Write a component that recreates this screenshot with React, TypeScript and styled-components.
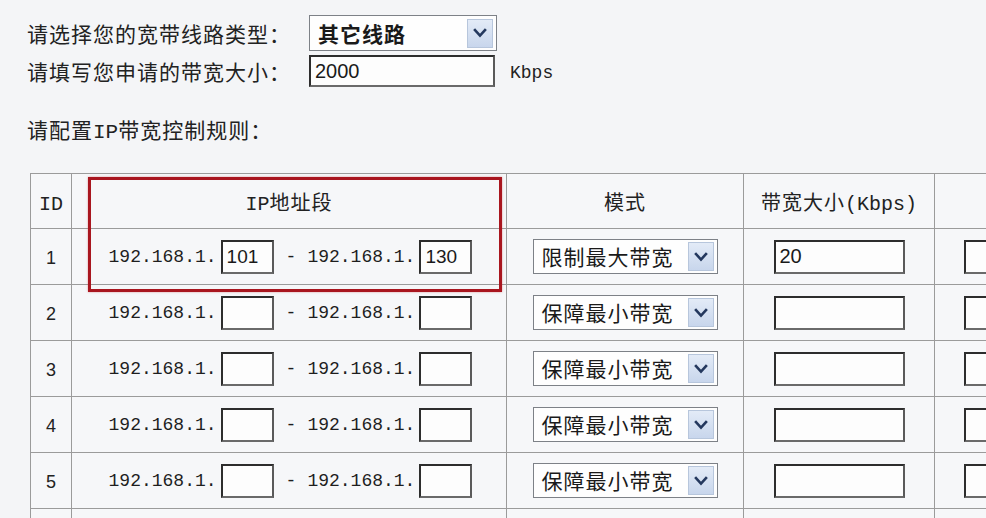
import React from "react";
import styled, { createGlobalStyle } from "styled-components";

const Global = createGlobalStyle`
  html, body {
    margin: 0;
    padding: 0;
    background: #f4f5f7;
    overflow: hidden;
  }
  body {
    width: 986px;
    height: 518px;
    color: #1e1e1e;
    font-family: "Noto Sans CJK SC", "Liberation Sans", sans-serif;
  }
`;

const cjk = `"Noto Sans CJK SC", "Liberation Sans", sans-serif`;
const mono = `"Liberation Mono", "DejaVu Sans Mono", "Noto Sans CJK SC", monospace`;
const sans = `"Liberation Sans", Arial, sans-serif`;

const Page = styled.div`
  width: 986px;
  height: 518px;
  overflow: hidden;
  padding: 15px 0 0 27px;
  box-sizing: border-box;
`;

const FormGrid = styled.div`
  display: grid;
  grid-template-columns: 282px auto auto;
  grid-template-rows: 36px 32px;
  row-gap: 4px;
  align-items: center;
  justify-content: start;
`;

const Label = styled.div`
  font-family: ${cjk};
  font-size: 21px;
  letter-spacing: 1px;
  line-height: 1;
  white-space: nowrap;
  color: #222;
`;

const Mono = styled.span`
  font-family: ${mono};
  letter-spacing: 0;
`;

const SelectBox = styled.div<{ $w: number; $h: number; $bold?: boolean }>`
  width: ${(p) => p.$w}px;
  height: ${(p) => p.$h}px;
  box-sizing: border-box;
  border: 1px solid #7d8187;
  background: #fefefe;
  display: flex;
  align-items: center;
  justify-content: space-between;
  padding: 0 3px 0 8px;
  font-family: ${cjk};
  font-size: 21px;
  letter-spacing: 1px;
  font-weight: ${(p) => (p.$bold ? 700 : 400)};
  color: #1a1a1a;
  line-height: 1;
  white-space: nowrap;
`;

const DropBtn = styled.div`
  width: 26px;
  height: 29px;
  box-sizing: border-box;
  border: 1px solid #b7c6dc;
  background: linear-gradient(#e3ebf7, #c8d6ec);
  display: flex;
  align-items: center;
  justify-content: center;
`;

const TextBox = styled.div<{ $w: number; $h: number; $size?: number }>`
  width: ${(p) => p.$w}px;
  height: ${(p) => p.$h}px;
  box-sizing: border-box;
  border: 2px solid #2d2d2d;
  border-right-color: #5a5a5a;
  border-bottom-color: #6a6a6a;
  background: #fdfdfd;
  display: flex;
  align-items: center;
  padding-left: 4px;
  font-family: ${sans};
  font-size: ${(p) => p.$size ?? 20}px;
  color: #1a1a1a;
`;

const Unit = styled.div`
  font-family: ${mono};
  font-size: 18px;
  margin-left: 13px;
  padding-top: 4px;
  color: #222;
`;

const SectionTitle = styled(Label)`
  margin-top: 32px;
`;

const TableWrap = styled.div`
  position: relative;
  margin-top: 30px;
  margin-left: 3px;
  width: 1100px;
`;

const Table = styled.table`
  border-collapse: collapse;
  table-layout: fixed;
  background: #f6f7f9;
`;

const Th = styled.th`
  height: 54px;
  padding: 0;
  border: 1px solid #9b9b9b;
  font-family: ${cjk};
  font-weight: 400;
  font-size: 20px;
  letter-spacing: 1px;
  color: #222;
  text-align: center;
  vertical-align: middle;
`;

const Td = styled.td<{ $align?: string; $pad?: number }>`
  height: 55px;
  padding: 0 0 0 ${(p) => p.$pad ?? 0}px;
  border: 1px solid #9b9b9b;
  text-align: ${(p) => p.$align ?? "center"};
  vertical-align: middle;
`;

const IdText = styled.span`
  font-family: ${sans};
  font-size: 18px;
  color: #222;
`;

const IpRange = styled.div`
  display: flex;
  align-items: center;
  justify-content: center;
  padding-left: 3px;
`;

const IpText = styled.span`
  font-family: ${mono};
  font-size: 18px;
  color: #1e1e1e;
  white-space: nowrap;
`;

const Dash = styled.span`
  font-family: ${mono};
  font-size: 18px;
  margin: 0 11px 0 12px;
  color: #1e1e1e;
`;

const IpBox = styled(TextBox)`
  margin-left: 4px;
`;

const CellCenter = styled.div`
  display: flex;
  justify-content: center;
  align-items: center;
`;

const Highlight = styled.div`
  position: absolute;
  left: 58px;
  top: 4px;
  width: 414px;
  height: 115px;
  box-sizing: border-box;
  border: 3px solid #a9161f;
  box-shadow: 0 0 2px rgba(200, 60, 60, 0.5);
  pointer-events: none;
`;

const Chevron = () => (
  <svg width="14" height="10" viewBox="0 0 14 10">
    <polyline
      points="2,2 7,7.5 12,2"
      fill="none"
      stroke="#24385e"
      strokeWidth="2.6"
      strokeLinecap="square"
    />
  </svg>
);

const Select = ({
  value,
  w,
  h,
  bold,
}: {
  value: string;
  w: number;
  h: number;
  bold?: boolean;
}) => (
  <SelectBox $w={w} $h={h} $bold={bold}>
    <span>{value}</span>
    <DropBtn>
      <Chevron />
    </DropBtn>
  </SelectBox>
);

const rows = [
  { id: 1, from: "101", to: "130", mode: "限制最大带宽", bw: "20" },
  { id: 2, from: "", to: "", mode: "保障最小带宽", bw: "" },
  { id: 3, from: "", to: "", mode: "保障最小带宽", bw: "" },
  { id: 4, from: "", to: "", mode: "保障最小带宽", bw: "" },
  { id: 5, from: "", to: "", mode: "保障最小带宽", bw: "" },
];

export default function App() {
  return (
    <>
      <Global />
      <Page>
        <FormGrid>
          <Label>请选择您的宽带线路类型：</Label>
          <Select value="其它线路" w={188} h={36} bold />
          <span />
          <Label>请填写您申请的带宽大小：</Label>
          <TextBox $w={186} $h={32}>2000</TextBox>
          <Unit>Kbps</Unit>
        </FormGrid>
        <SectionTitle>
          请配置<Mono>IP</Mono>带宽控制规则：
        </SectionTitle>
        <TableWrap>
          <Table>
            <colgroup>
              <col style={{ width: 41 }} />
              <col style={{ width: 435 }} />
              <col style={{ width: 237 }} />
              <col style={{ width: 191 }} />
              <col style={{ width: 120 }} />
            </colgroup>
            <thead>
              <tr>
                <Th>
                  <Mono>ID</Mono>
                </Th>
                <Th>
                  <Mono>IP</Mono>地址段
                </Th>
                <Th>模式</Th>
                <Th>
                  带宽大小<Mono>(Kbps)</Mono>
                </Th>
                <Th />
              </tr>
            </thead>
            <tbody>
              {rows.map((r) => (
                <tr key={r.id}>
                  <Td>
                    <IdText>{r.id}</IdText>
                  </Td>
                  <Td>
                    <IpRange>
                      <IpText>192.168.1.</IpText>
                      <IpBox $w={53} $h={34} $size={19}>
                        {r.from}
                      </IpBox>
                      <Dash>-</Dash>
                      <IpText>192.168.1.</IpText>
                      <IpBox $w={53} $h={34} $size={19}>
                        {r.to}
                      </IpBox>
                    </IpRange>
                  </Td>
                  <Td>
                    <CellCenter>
                      <Select value={r.mode} w={185} h={35} />
                    </CellCenter>
                  </Td>
                  <Td>
                    <CellCenter>
                      <TextBox $w={131} $h={34}>
                        {r.bw}
                      </TextBox>
                    </CellCenter>
                  </Td>
                  <Td $align="left" $pad={29}>
                    <TextBox $w={60} $h={34} />
                  </Td>
                </tr>
              ))}
              <tr>
                <Td />
                <Td />
                <Td />
                <Td />
                <Td />
              </tr>
            </tbody>
          </Table>
          <Highlight />
        </TableWrap>
      </Page>
    </>
  );
}
